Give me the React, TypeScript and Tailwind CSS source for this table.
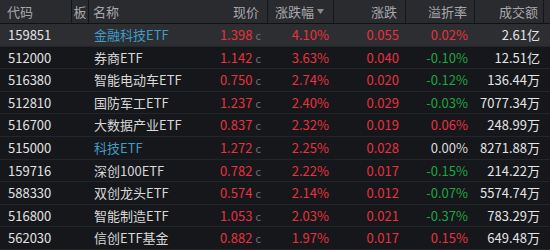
type Row = {
  code: string;
  name: string;
  blue?: boolean;
  price: string;
  pct: string;
  chg: string;
  prem: string;
  amount: string;
};

const rows: Row[] = [
  { code: '159851', name: '金融科技ETF', blue: true, price: '1.398', pct: '4.10%', chg: '0.055', prem: '0.02%', amount: '2.61亿' },
  { code: '512000', name: '券商ETF', price: '1.142', pct: '3.63%', chg: '0.040', prem: '-0.10%', amount: '12.51亿' },
  { code: '516380', name: '智能电动车ETF', price: '0.750', pct: '2.74%', chg: '0.020', prem: '-0.12%', amount: '136.44万' },
  { code: '512810', name: '国防军工ETF', price: '1.237', pct: '2.40%', chg: '0.029', prem: '-0.03%', amount: '7077.34万' },
  { code: '516700', name: '大数据产业ETF', price: '0.837', pct: '2.32%', chg: '0.019', prem: '0.06%', amount: '248.99万' },
  { code: '515000', name: '科技ETF', blue: true, price: '1.272', pct: '2.25%', chg: '0.028', prem: '0.00%', amount: '8271.88万' },
  { code: '159716', name: '深创100ETF', price: '0.782', pct: '2.22%', chg: '0.017', prem: '-0.15%', amount: '214.22万' },
  { code: '588330', name: '双创龙头ETF', price: '0.574', pct: '2.14%', chg: '0.012', prem: '-0.07%', amount: '5574.74万' },
  { code: '516800', name: '智能制造ETF', price: '1.053', pct: '2.03%', chg: '0.021', prem: '-0.37%', amount: '783.29万' },
  { code: '562030', name: '信创ETF基金', price: '0.882', pct: '1.97%', chg: '0.017', prem: '0.15%', amount: '649.48万' },
];

const cols = 'grid grid-cols-[72px_17px_111px_68px_66px_72px_69px_69px_6px]';

function premColor(v: string) {
  if (v.startsWith('-')) return 'text-[#1fa543]';
  if (v === '0.00%') return 'text-[#dcdcdc]';
  return 'text-[#e8323f]';
}

export default function App() {
  return (
    <div
      className="w-[550px] h-[250px] overflow-hidden bg-[#16171b] text-[13px]"
      style={{ fontFamily: '"Noto Sans CJK SC", "Noto Sans", sans-serif' }}
    >
      {/* header */}
      <div className={`${cols} h-[24px] items-center bg-[#2a2b2f] text-[#a8a8ac] border-b border-[#111214]`}>
        <div className="h-full flex items-center pl-[7px] border-r border-[#15161a]">代码</div>
        <div className="h-full flex items-center justify-center border-r border-[#15161a]">板</div>
        <div className="h-full flex items-center pl-[4px]">名称</div>
        <div className="h-full flex items-center justify-end pr-[8px] border-r border-[#15161a]">现价</div>
        <div className="h-full flex items-center pl-[7px] gap-[3px] border-r border-[#15161a]">
          <span>涨跌幅</span>
          <svg width="7" height="5" viewBox="0 0 7 5">
            <path d="M0 0 L7 0 L3.5 5 Z" fill="#8a8a8e" />
          </svg>
        </div>
        <div className="h-full flex items-center justify-end pr-[8px] border-r border-[#15161a]">涨跌</div>
        <div className="h-full flex items-center justify-end pr-[7px] border-r border-[#15161a]">溢折率</div>
        <div className="h-full flex items-center justify-end pr-[5px] border-r border-[#15161a]">成交额</div>
        <div className="h-full" />
      </div>

      {rows.map((r, i) => (
        <div
          key={r.code}
          className={`${cols} h-[22.6px] items-center border-b border-[#24252a] ${i === 0 ? 'bg-[#2d2e32]' : ''}`}
        >
          <div className="pl-[8px] text-[#e2e2e2]">{r.code}</div>
          <div />
          <div className={`pl-[5px] whitespace-nowrap ${r.blue ? 'text-[#3f9cc6]' : 'text-[#d8d8d8]'}`}>{r.name}</div>
          <div className="flex items-baseline justify-end pr-[7px]">
            <span className="text-[#e8323f]">{r.price}</span>
            <span className="ml-[3px] text-[11px] text-[#6e6f73]">c</span>
          </div>
          <div className="text-right pr-[5px] text-[#e8323f]">{r.pct}</div>
          <div className="text-right pr-[7px] text-[#e8323f]">{r.chg}</div>
          <div className={`text-right pr-[7px] ${premColor(r.prem)}`}>{r.prem}</div>
          <div className="text-right pr-[4px] text-[#e4e4e6] whitespace-nowrap">{r.amount}</div>
          <div />
        </div>
      ))}
    </div>
  );
}
